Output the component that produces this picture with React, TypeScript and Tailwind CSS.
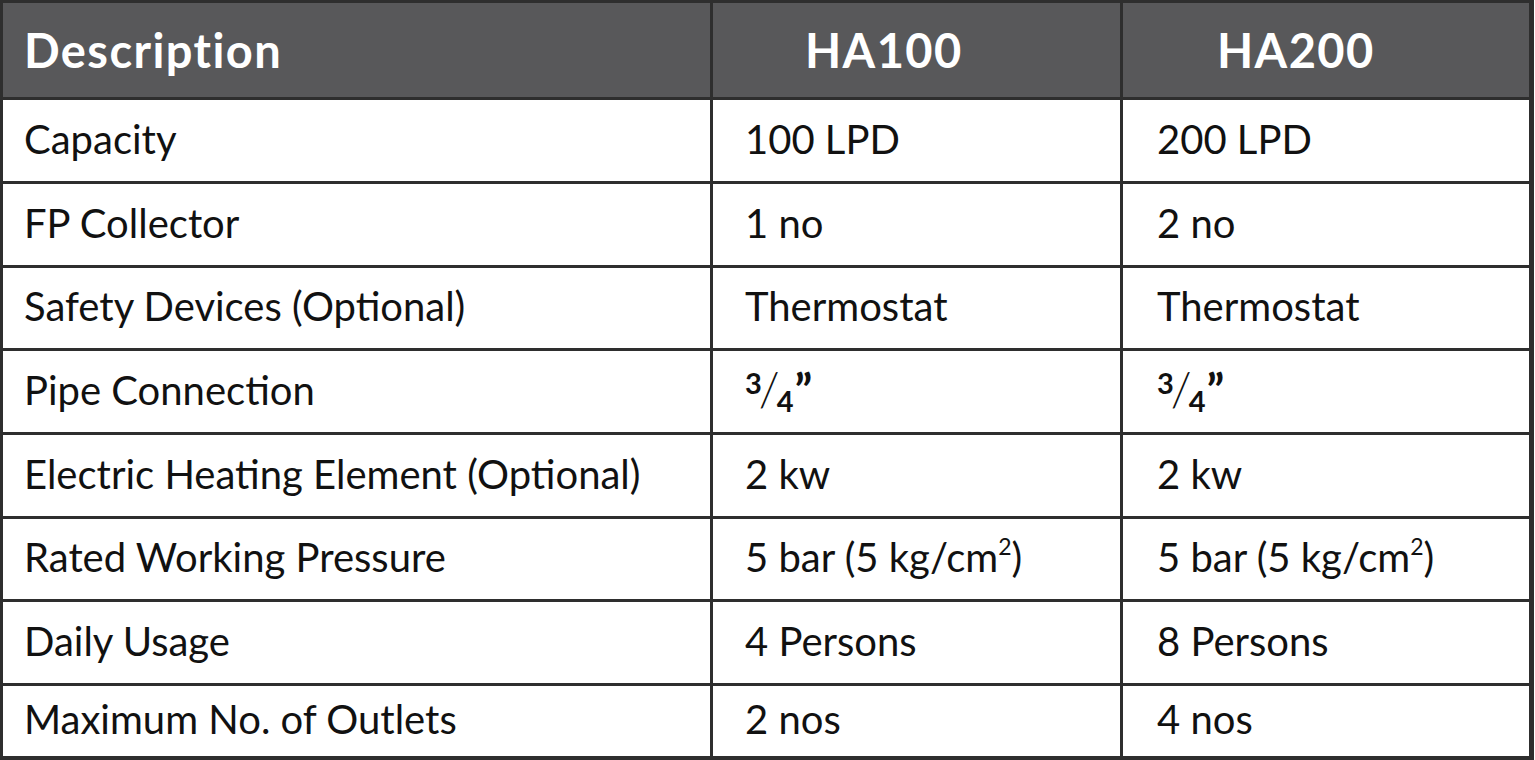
import type { ReactNode } from "react";

const Frac = () => (
  <span className="font-bold inline-flex items-start h-[42px]">
    <span className="text-[29px] leading-none -mt-[1px]">3</span>
    <span className="font-light text-[48px] leading-none -mx-[3px] -mt-[5px]">/</span>
    <span className="text-[29px] leading-none mt-[17px]">4</span>
    <span className="text-[46px] leading-none ml-[1px] -mt-[2px]">”</span>
  </span>
);

const Pressure = () => (
  <>
    5 bar (5 kg/cm<sup className="text-[23px]">2</sup>)
  </>
);

const ROWS: { label: string; a: ReactNode; b: ReactNode; h: string }[] = [
  { label: "Capacity", a: "100 LPD", b: "200 LPD", h: "h-[81px]" },
  { label: "FP Collector", a: "1 no", b: "2 no", h: "h-[81px]" },
  { label: "Safety Devices (Optional)", a: "Thermostat", b: "Thermostat", h: "h-[80px]" },
  { label: "Pipe Connection", a: <Frac />, b: <Frac />, h: "h-[81px]" },
  { label: "Electric Heating Element (Optional)", a: "2 kw", b: "2 kw", h: "h-[81px]" },
  { label: "Rated Working Pressure", a: <Pressure />, b: <Pressure />, h: "h-[80px]" },
  { label: "Daily Usage", a: "4 Persons", b: "8 Persons", h: "h-[81px]" },
  { label: "Maximum No. of Outlets", a: "2 nos", b: "4 nos", h: "h-[70px]" },
];

export default function App() {
  return (
    <div className="w-[1535px] h-[760px] bg-white font-['Lato','Liberation_Sans',sans-serif] text-[#111]">
      <div className="w-[1534px] bg-[#2e2e2e] border-[3px] border-[#2e2e2e] border-r-[5px] border-b-[4px] grid grid-cols-[707px_407px_406px] gap-[3px]">
        <div className="h-[94px] bg-[#58585a] text-white font-bold text-[47px] tracking-[0.03em] flex items-center pl-[21px]">
          Description
        </div>
        <div className="h-[94px] bg-[#58585a] text-white font-bold text-[47px] tracking-[0.03em] flex items-center pl-[92px]">
          HA100
        </div>
        <div className="h-[94px] bg-[#58585a] text-white font-bold text-[47px] tracking-[0.03em] flex items-center pl-[94px]">
          HA200
        </div>
        {ROWS.map((r) => (
          <div key={r.label} className="contents">
            <div className={`${r.h} bg-white text-[40px] flex items-center pl-[21px] pb-[4px]`}>{r.label}</div>
            <div className={`${r.h} bg-white text-[40px] flex items-center pl-[32px] pb-[4px]`}>{r.a}</div>
            <div className={`${r.h} bg-white text-[40px] flex items-center pl-[34px] pb-[4px]`}>{r.b}</div>
          </div>
        ))}
      </div>
    </div>
  );
}
